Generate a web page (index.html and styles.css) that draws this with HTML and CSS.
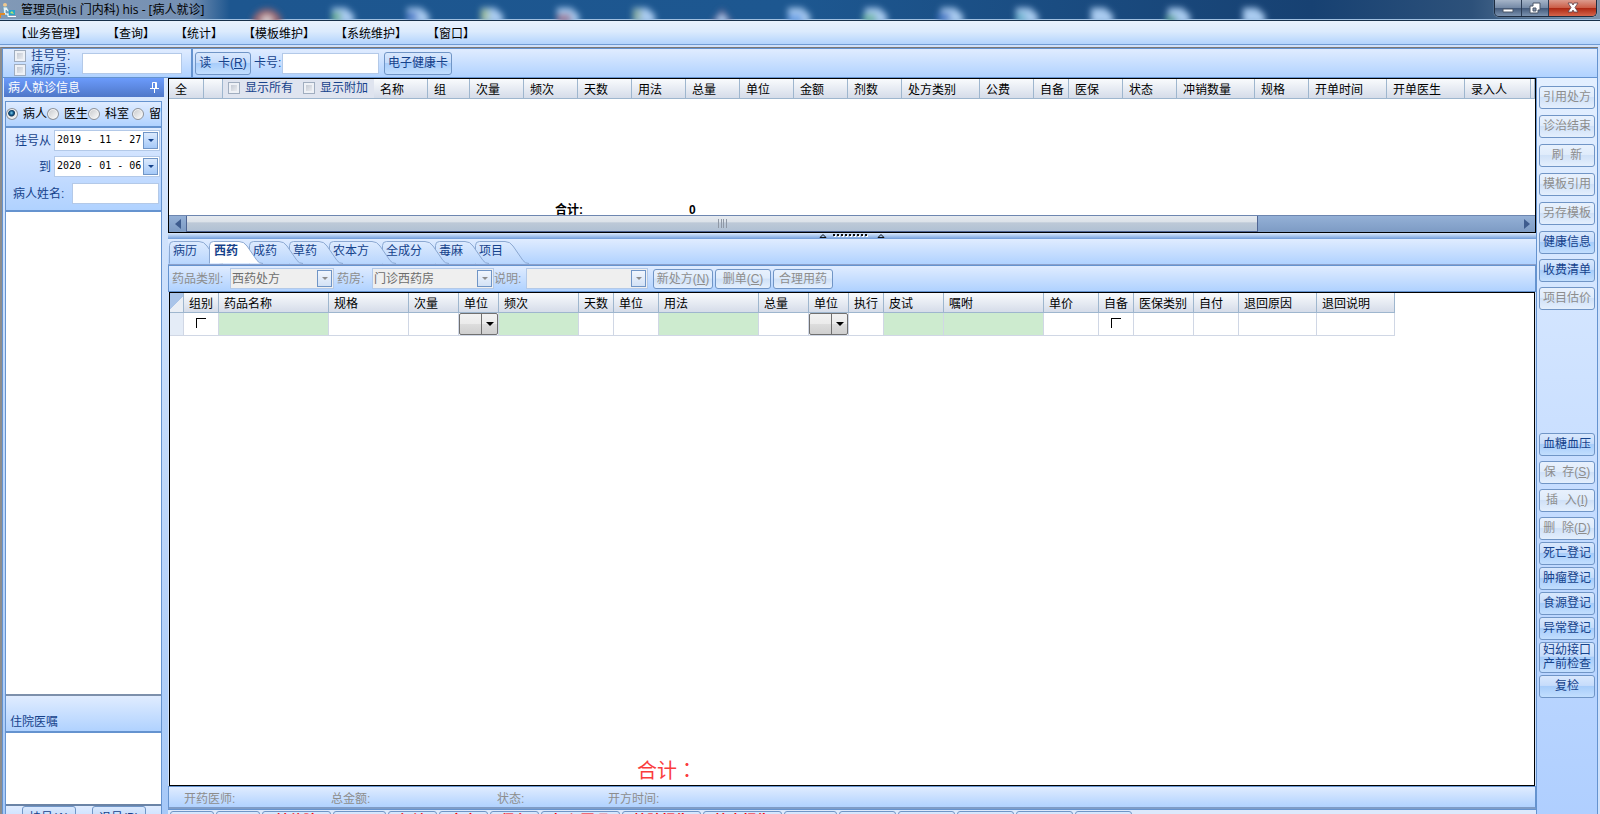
FILE: index.html
```html
<!DOCTYPE html>
<html lang="zh-CN">
<head>
    <meta charset="UTF-8">
    <meta name="viewport" content="width=device-width, initial-scale=1.0">
    <title>管理员(his 门内科) his - [病人就诊]</title>
    <link rel="stylesheet" href="styles.css">
</head>
<body>

<div class="app">
    <header class="titlebar">
        <svg class="glass" width="1300" height="20" viewBox="0 0 1300 20" aria-hidden="true">
            <defs>
                <filter id="soft" x="-20%" y="-100%" width="140%" height="300%"><feGaussianBlur stdDeviation="3"/></filter>
                <path id="doc" d="M-10 24V8h14l8 7v9z"/>
            </defs>
            <g filter="url(#soft)" fill="#a9cbf0">
                <path d="M252 24a15 15 0 0 1 30 0z" fill="#a0676f"/>
                <circle cx="267" cy="21" r="6" fill="#d6c9cc"/>
                <use href="#doc" x="342"/><rect x="332" y="12" width="9" height="9" fill="#6bb093"/>
                <use href="#doc" x="417"/><rect x="407" y="12" width="10" height="9" fill="#4b7cc9"/>
                <use href="#doc" x="491"/><rect x="481" y="9" width="8" height="12" fill="#a3c2a0"/>
                <use href="#doc" x="567"/><rect x="557" y="14" width="14" height="8" fill="#9c7795"/>
                <use href="#doc" x="643"/><rect x="633" y="9" width="8" height="12" fill="#8db1a6"/>
                <path d="M711 24l11-15 11 15z" fill="#87739b"/><circle cx="722" cy="20" r="5"/>
                <use href="#doc" x="798"/><rect x="788" y="14" width="14" height="8" fill="#6da2e6"/>
                <use href="#doc" x="875"/><rect x="863" y="14" width="13" height="8" fill="#70b6a4"/>
                <use href="#doc" x="951"/><rect x="938" y="13" width="12" height="8" fill="#3c74c5"/>
                <use href="#doc" x="1026"/><rect x="1016" y="13" width="10" height="8" fill="#6db4cf"/>
                <use href="#doc" x="1101"/>
                <use href="#doc" x="1178"/><rect x="1166" y="15" width="10" height="8" fill="#5fa49b"/>
                <use href="#doc" x="1253"/>
            </g>
        </svg>
        <div class="caption">
            <svg width="16" height="16" viewBox="0 0 16 16" aria-hidden="true">
                <circle cx="5" cy="3" r="2" fill="#f0c98f"/>
                <path d="M3 5h4l2 4-1 1-2-2v3h3v4H7v-2H4z" fill="#e8f3f8" stroke="#5e9dbb" stroke-width=".7"/>
                <path d="M0 11h5v2H1v3H0z" fill="#e08a28"/>
                <path d="M9 8h6v5H9z" fill="#29a6c9"/>
                <path d="M8 14h8v1H8z" fill="#fff"/>
                <path d="M10 11l2-2 2 3z" fill="#bfe36d"/>
            </svg>
            <span>管理员(his 门内科) his - [病人就诊]</span>
        </div>
        <div class="controls">
            <button type="button" aria-label="最小化">
                <svg width="14" height="12" viewBox="0 0 14 12"><path d="M2 7h10v3H2z" fill="#fff" stroke="#4b5668"/></svg>
            </button>
            <button type="button" aria-label="还原">
                <svg width="14" height="13" viewBox="0 0 14 13"><path d="M5 1h7v7h-2v3H2V4h3z" fill="#fff" stroke="#4b5668"/><path d="M5 6h3v3H5z" fill="#8595ad" stroke="#4b5668"/></svg>
            </button>
            <button type="button" class="close" aria-label="关闭">
                <svg width="14" height="12" viewBox="0 0 14 12"><path d="M2 1h4l1 2 1-2h4L9 5.500l3 4.500H8L7 8l-1 2H2l3-4.500z" fill="#fff" stroke="#5d4048" stroke-width=".8"/></svg>
            </button>
        </div>
    </header>

    <nav class="menubar">
        <button type="button">【业务管理】</button>
        <button type="button">【查询】</button>
        <button type="button">【统计】</button>
        <button type="button">【模板维护】</button>
        <button type="button">【系统维护】</button>
        <button type="button">【窗口】</button>
    </nav>

    <div class="frame">
        <div class="toolbar">
            <div class="search">
                <div class="checks">
                    <label><input type="checkbox" class="check">挂号号:</label>
                    <label><input type="checkbox" class="check">病历号:</label>
                </div>
                <input type="text" class="field" aria-label="号码">
            </div>
            <div class="card-tools">
                <button type="button" class="btn">读&nbsp; 卡(<u>R</u>)</button>
                <label for="cardNo">卡号:</label>
                <input type="text" class="field" id="cardNo">
                <button type="button" class="btn health">电子健康卡</button>
            </div>
        </div>

        <div class="body">
            <aside class="patients">
                <h2>病人就诊信息
                    <svg width="9" height="11" viewBox="0 0 9 11" aria-hidden="true"><path d="M2.500 6V.5h4V6M5.500 1v5M0 6.500h9M4.500 7v4" fill="none" stroke="#fff"/></svg>
                </h2>
                <div class="panel">
                    <div class="kinds">
                        <label><input type="radio" name="kind" checked>病人</label>
                        <label><input type="radio" name="kind">医生</label>
                        <label><input type="radio" name="kind">科室</label>
                        <label><input type="radio" name="kind">留</label>
                    </div>
                    <div class="filters">
                        <label for="dateFrom">挂号从</label>
                        <div class="date">
                            <input type="text" id="dateFrom" value="2019 - 11 - 27">
                            <button type="button" class="drop" aria-label="选择开始日期"></button>
                        </div>
                        <label for="dateTo">到</label>
                        <div class="date">
                            <input type="text" id="dateTo" value="2020 - 01 - 06">
                            <button type="button" class="drop" aria-label="选择结束日期"></button>
                        </div>
                    </div>
                    <div class="name-row">
                        <label for="patientName">病人姓名:</label>
                        <input type="text" class="field" id="patientName">
                    </div>
                    <div class="list"></div>
                    <h3>住院医嘱</h3>
                    <div class="orders"></div>
                    <div class="reg-buttons">
                        <button type="button" class="btn">挂号(<u>A</u>)</button>
                        <button type="button" class="btn">退号(<u>B</u>)</button>
                    </div>
                </div>
            </aside>

            <main class="work">
                <section class="summary">
                    <table class="grid">
                        <colgroup>
                            <col class="w35"><col class="w19"><col class="w151"><col class="w54"><col class="w42">
                            <col class="w54"><col class="w54"><col class="w54"><col class="w54">
                            <col class="w54"><col class="w54"><col class="w54"><col class="w54">
                            <col class="w78"><col class="w54"><col class="w35"><col class="w54"><col class="w54">
                            <col class="w78"><col class="w54"><col class="w78"><col class="w78"><col class="w66"><col>
                        </colgroup>
                        <thead>
                            <tr>
                                <th>全</th><th></th>
                                <th class="shows">
                                    <div>
                                        <label><input type="checkbox" class="check">显示所有</label>
                                        <label><input type="checkbox" class="check">显示附加</label>
                                    </div>
                                </th>
                                <th>名称</th><th>组</th><th>次量</th><th>频次</th><th>天数</th><th>用法</th>
                                <th>总量</th><th>单位</th><th>金额</th><th>剂数</th><th>处方类别</th><th>公费</th>
                                <th>自备</th><th>医保</th><th>状态</th><th>冲销数量</th><th>规格</th>
                                <th>开单时间</th><th>开单医生</th><th>录入人</th><th></th>
                            </tr>
                        </thead>
                    </table>
                    <div class="sum-row"><span>合计:</span><span>0</span></div>
                    <div class="scrollbar">
                        <span class="arrow"><svg width="6" height="10" viewBox="0 0 6 10"><path d="M6 0v10L0 5z" fill="#3e5c8e"/></svg></span>
                        <span class="track"><span class="thumb"><svg width="9" height="9" viewBox="0 0 9 9"><path d="M.5 0v9M3.500 0v9M5.500 0v9M8.500 0v9" stroke="#8f98a5"/></svg></span></span>
                        <span class="arrow"><svg width="6" height="10" viewBox="0 0 6 10"><path d="M0 0v10l6-5z" fill="#3e5c8e"/></svg></span>
                    </div>
                </section>

                <div class="splitter">
                    <svg width="66" height="6" viewBox="0 0 66 6" aria-hidden="true">
                        <path d="M1 4.500h6L4 1.500zM59 4.500h6L62 1.500z" fill="#9cc0ee" stroke="#111"/>
                        <path d="M15 3h36" stroke="#fff" stroke-width="2" stroke-dasharray="2 2"/>
                        <path d="M14 2h36" stroke="#111" stroke-width="2" stroke-dasharray="2 2"/>
                    </svg>
                </div>

                <div class="tabs">
                    <button type="button" class="tab"><svg width="54" height="23"><use href="#tab2"/></svg><span>病历</span></button>
                    <button type="button" class="tab active"><svg width="54" height="23"><use href="#tab2"/></svg><span>西药</span></button>
                    <button type="button" class="tab"><svg width="54" height="23"><use href="#tab2"/></svg><span>成药</span></button>
                    <button type="button" class="tab"><svg width="54" height="23"><use href="#tab2"/></svg><span>草药</span></button>
                    <button type="button" class="tab wide"><svg width="67" height="23"><use href="#tab3"/></svg><span>农本方</span></button>
                    <button type="button" class="tab wide"><svg width="67" height="23"><use href="#tab3"/></svg><span>全成分</span></button>
                    <button type="button" class="tab"><svg width="54" height="23"><use href="#tab2"/></svg><span>毒麻</span></button>
                    <button type="button" class="tab"><svg width="54" height="23"><use href="#tab2"/></svg><span>项目</span></button>
                </div>

                <div class="rx-bar">
                    <label for="drugType" class="first">药品类别:</label>
                    <span class="combo type"><select id="drugType" disabled><option>西药处方</option></select><i class="drop"></i></span>
                    <label for="pharmacy">药房:</label>
                    <span class="combo"><select id="pharmacy" disabled><option>门诊西药房</option></select><i class="drop"></i></span>
                    <label for="note" class="last">说明:</label>
                    <span class="combo"><select id="note" disabled><option></option></select><i class="drop"></i></span>
                    <div class="rx-buttons">
                        <button type="button" class="btn" disabled>新处方(<u>N</u>)</button>
                        <button type="button" class="btn short" disabled>删单(<u>C</u>)</button>
                        <button type="button" class="btn" disabled>合理用药</button>
                    </div>
                </div>

                <section class="rx">
                    <table class="grid">
                        <colgroup>
                            <col class="w14"><col class="w35"><col class="w110"><col class="w80"><col class="w50">
                            <col class="w40"><col class="w80"><col class="w35"><col class="w45"><col class="w100">
                            <col class="w50"><col class="w40"><col class="w35"><col class="w60"><col class="w100">
                            <col class="w55"><col class="w35"><col class="w60"><col class="w45"><col class="w78"><col class="w78">
                        </colgroup>
                        <thead>
                            <tr>
                                <th class="corner"></th><th>组别</th><th>药品名称</th><th>规格</th><th>次量</th><th>单位</th>
                                <th>频次</th><th>天数</th><th>单位</th><th>用法</th><th>总量</th><th>单位</th><th>执行</th>
                                <th>皮试</th><th>嘱咐</th><th>单价</th><th>自备</th><th>医保类别</th><th>自付</th>
                                <th>退回原因</th><th>退回说明</th>
                            </tr>
                        </thead>
                        <tbody>
                            <tr>
                                <td class="row-head"></td>
                                <td class="tick"><input type="checkbox" aria-label="组别"></td>
                                <td class="req"></td><td></td><td></td>
                                <td class="unit"><span class="cell-combo"><select aria-label="次量单位"><option></option></select><i></i></span></td>
                                <td class="req"></td><td></td><td></td><td class="req"></td><td></td>
                                <td class="unit"><span class="cell-combo"><select aria-label="总量单位"><option></option></select><i></i></span></td>
                                <td></td><td class="req"></td><td class="req"></td><td></td>
                                <td class="tick"><input type="checkbox" aria-label="自备"></td>
                                <td></td><td></td><td></td><td></td>
                            </tr>
                        </tbody>
                    </table>
                    <div class="total" lang="zh-Hant">合计：</div>
                </section>

                <div class="status">
                    <span>开药医师:</span>
                    <span>总金额:</span>
                    <span>状态:</span>
                    <span>开方时间:</span>
                </div>

                <div class="actions">
                    <button type="button" class="btn s"></button>
                    <button type="button" class="btn s"></button>
                    <button type="button" class="btn l">转住院</button>
                    <button type="button" class="btn m"></button>
                    <button type="button" class="btn n">复诊</button>
                    <button type="button" class="btn n">审方</button>
                    <button type="button" class="btn n">保存</button>
                    <button type="button" class="btn xl">打印医嘱</button>
                    <button type="button" class="btn xl">检验报告</button>
                    <button type="button" class="btn xl">检查报告</button>
                    <button type="button" class="btn m"></button>
                    <button type="button" class="btn w"></button>
                    <button type="button" class="btn w"></button>
                    <button type="button" class="btn w"></button>
                    <button type="button" class="btn w"></button>
                    <button type="button" class="btn w"></button>
                </div>
            </main>

            <aside class="side">
                <div class="group loose">
                    <button type="button" class="btn" disabled>引用处方</button>
                    <button type="button" class="btn" disabled>诊治结束</button>
                    <button type="button" class="btn" disabled>刷&nbsp; 新</button>
                    <button type="button" class="btn" disabled>模板引用</button>
                    <button type="button" class="btn" disabled>另存模板</button>
                    <button type="button" class="btn">健康信息</button>
                </div>
                <div class="group billing">
                    <button type="button" class="btn">收费清单</button>
                    <button type="button" class="btn" disabled>项目估价</button>
                </div>
                <div class="group medium">
                    <button type="button" class="btn">血糖血压</button>
                    <button type="button" class="btn" disabled>保&nbsp; 存(<u>S</u>)</button>
                    <button type="button" class="btn" disabled>插&nbsp; 入(<u>I</u>)</button>
                    <button type="button" class="btn" disabled>删&nbsp; 除(<u>D</u>)</button>
                </div>
                <div class="group tight">
                    <button type="button" class="btn">死亡登记</button>
                    <button type="button" class="btn">肿瘤登记</button>
                    <button type="button" class="btn">食源登记</button>
                    <button type="button" class="btn">异常登记</button>
                    <button type="button" class="btn tall">妇幼接口<br>产前检查</button>
                    <button type="button" class="btn">复检</button>
                </div>
            </aside>
        </div>
    </div>
</div>

<svg class="defs" width="0" height="0" aria-hidden="true">
    <defs>
        <linearGradient id="tabFill" x1="0" y1="0" x2="0" y2="1">
            <stop offset="0" stop-color="#deebfe"/>
            <stop offset="1" stop-color="#b9d6fd"/>
        </linearGradient>
        <path id="tab2" d="M.5 22.500V4.500Q.5 .5 4.500 .5H30Q35 .5 38 5L48 19.500Q50 22.500 54 22.500"/>
        <path id="tab3" d="M.5 22.500V4.500Q.5 .5 4.500 .5H43Q48 .5 51 5L61 19.500Q63 22.500 67 22.500"/>
    </defs>
</svg>

</body>
</html>
```

FILE: styles.css
```css
* {
    box-sizing: border-box;
}
body {
    margin: 0;
    height: 100vh;
    overflow: hidden;
    font-family: "Liberation Sans", "Noto Sans CJK SC", sans-serif;
    font-size: 12px;
    line-height: 14px;
    color: #15428b;
    background: #cfe1fb;
}
button, input, select {
    font: inherit;
    color: inherit;
    margin: 0;
    padding: 0;
}
h2, h3 {
    margin: 0;
    font-size: 12px;
    font-weight: normal;
}
.defs {
    position: absolute;
}

/* the window is a little taller than the screen */
.app {
    display: flex;
    flex-direction: column;
    height: calc(100vh + 20px);
}

/* title bar */
.titlebar {
    position: relative;
    display: flex;
    flex: none;
    justify-content: space-between;
    height: 21px;
    overflow: hidden;
    color: #000;
    background: linear-gradient(90deg, #8199b6 0, #7590b3 190px, #1d568f 230px, #1d5790 50%, #174172 82%, #2d517a 92%, #7d93ab 100%);
    border-bottom: 1px solid #17304a;
    box-shadow: inset 0 -1px 0 #9fbfe0;
}
.glass {
    position: absolute;
    left: 0;
    top: 0;
}
.caption {
    display: flex;
    align-items: center;
    gap: 5px;
    height: 19px;
    position: relative;
    font-family: "Open Sans", "Noto Sans CJK SC", sans-serif;
    white-space: nowrap;
}
.controls {
    position: relative;
    display: flex;
    height: 17px;
    margin-right: 3px;
    border: 1px solid #1d2c40;
    border-top: 0;
    border-radius: 0 0 5px 5px;
    overflow: hidden;
    box-shadow: 0 0 1px #fff;
}
.controls button {
    display: flex;
    align-items: center;
    justify-content: center;
    width: 27px;
    border: 0;
    border-right: 1px solid #2b3c55;
    background: linear-gradient(#a5b4c8, #7388a5 50%, #42597a 51%, #7c93b0);
}
.controls .close {
    width: 47px;
    border-right: 0;
    background: linear-gradient(#dc9b8d, #cb5c45 50%, #ad2712 51%, #d5654b);
}

/* menu */
.menubar {
    display: flex;
    flex: none;
    gap: 20px;
    height: 24px;
    padding: 2px 0 0 15px;
    background: linear-gradient(#e9f2fd, #dcebfd 45%, #b3d4fd);
    border-bottom: 1px solid #6f9bd3;
}
.menubar button {
    border: 0;
    background: none;
    color: #000;
}

.frame {
    display: flex;
    flex-direction: column;
    flex: 1;
    min-height: 0;
    margin: 2px 2px 0 0;
    border-top: 1px solid #7d7873;
    border-left: 2px solid #8d8d8d;
}

/* search toolbar */
.toolbar {
    display: flex;
    flex: none;
    height: 30px;
    border: 1px solid #6593cf;
    background: linear-gradient(#e0ecff, #b0d2ff);
}
.search {
    display: flex;
    align-items: center;
    width: 190px;
    padding-left: 11px;
    border-right: 2px solid #6593cf;
}
.checks {
    width: 68px;
}
.checks label {
    display: flex;
    align-items: center;
    gap: 5px;
}
.check {
    appearance: none;
    flex: none;
    width: 12px;
    height: 12px;
    border: 1px solid #a0adbf;
    background: linear-gradient(135deg, #b9c0cc, #f4f5f7);
    box-shadow: inset 0 0 0 2px #eef1f6;
}
.field {
    height: 21px;
    min-width: 0;
    padding: 0 4px;
    border: 1px solid #b3c9e8;
    background: #fff;
    color: #000;
}
.search .field {
    width: 100px;
}
.card-tools {
    display: flex;
    align-items: center;
    padding-left: 2px;
}
.card-tools .btn {
    width: 56px;
    height: 23px;
}
.card-tools label {
    width: 31px;
    padding-left: 3px;
}
.card-tools .field {
    width: 97px;
}
.card-tools .health {
    width: 68px;
    margin-left: 5px;
}

.btn {
    flex: none;
    border: 1px solid #7095c6;
    border-radius: 3px;
    background: linear-gradient(#d9e8fd, #c6dcfb 45%, #a8cdfa 50%, #c2defe);
    color: #15428b;
    white-space: nowrap;
}
.btn:disabled {
    background: linear-gradient(#e8f1fd, #e0ecfb 45%, #d0e1f7 50%, #e4effd);
    color: #8d8d8d;
}

.body {
    display: flex;
    flex: 1;
    min-height: 0;
}

/* patient list */
.patients {
    display: flex;
    flex: none;
    flex-direction: column;
    width: 166px;
    padding: 0 4px 0 1px;
    border-left: 1px solid #6593cf;
    background: linear-gradient(#dbe9fd, #a5c8f8);
}
.patients h2 {
    display: flex;
    align-items: center;
    justify-content: space-between;
    flex: none;
    height: 19px;
    padding: 0 5px 0 4px;
    color: #fff;
    background: linear-gradient(#6b9bfb, #4f77c8);
}
.panel {
    display: flex;
    flex: 1;
    flex-direction: column;
    min-height: 0;
    margin: 4px 2px 0 1px;
    border: 1px solid #6593cf;
    background: #c8defd;
}
.kinds {
    display: flex;
    align-items: center;
    flex: none;
    height: 26px;
    overflow: hidden;
    color: #000;
    background: linear-gradient(#e0ecff, #b0d2ff);
    border-bottom: 2px solid #6593cf;
}
.kinds label {
    display: flex;
    flex: none;
    align-items: center;
    gap: 5px;
    width: 41px;
    white-space: nowrap;
}
.kinds label:nth-child(3) {
    width: 44px;
}
.kinds input {
    appearance: none;
    width: 12px;
    height: 12px;
    border: 1px solid #8e9299;
    border-radius: 50%;
    background: linear-gradient(135deg, #c5c7ca, #fff);
    box-shadow: inset 0 0 0 1px #f4f4f4;
}
.kinds input:checked {
    background: radial-gradient(circle at 45% 40%, #7fd0ee 0, #12598c 2px, #123859 3px, #e8eaec 4px);
}
.filters {
    display: grid;
    grid-template-columns: 45px 106px;
    gap: 5px 3px;
    align-items: center;
    flex: none;
    padding-top: 2px;
    background: linear-gradient(#e0ecff, #c3dbff);
}
.filters label {
    text-align: right;
}
.date {
    display: flex;
    align-items: center;
    height: 21px;
    padding: 1px;
    border: 1px solid #b3c9e8;
    background: #fff;
}
.date input {
    flex: 1;
    min-width: 0;
    padding: 0 0 2px 1px;
    border: 0;
    font-family: "DejaVu Sans Mono", monospace;
    font-size: 10px;
    color: #000;
}
.drop {
    display: flex;
    align-items: center;
    justify-content: center;
    flex: none;
    width: 15px;
    height: 17px;
    border: 1px solid #7095c6;
    background: linear-gradient(#dceafd, #a5c9f8);
}
.drop::after {
    content: "";
    border: 3px solid transparent;
    border-top-color: #15428b;
    border-bottom: 0;
}
.name-row {
    display: flex;
    align-items: center;
    flex: none;
    height: 35px;
    padding-left: 7px;
    border-bottom: 2px solid #6593cf;
    background: linear-gradient(#c3dbff, #b0d2ff);
}
.name-row label {
    width: 59px;
}
.name-row .field {
    width: 87px;
}
.list {
    flex: 1;
    min-height: 0;
    background: #fff;
}
.panel h3 {
    flex: none;
    height: 39px;
    padding: 19px 0 0 4px;
    border-top: 2px solid #7d90ab;
    border-bottom: 2px solid #6593cf;
    background: linear-gradient(#e0ecff, #b0d2ff);
}
.orders {
    flex: none;
    height: 71px;
    background: #fff;
}
.reg-buttons {
    display: flex;
    flex: none;
    gap: 16px;
    height: 29px;
    padding: 0 0 0 16px;
    border-top: 2px solid #6b84a6;
    background: linear-gradient(#e0ecff, #b0d2ff);
}
.reg-buttons .btn {
    width: 54px;
    height: 23px;
}

/* work area */
.work {
    display: flex;
    flex: 1;
    flex-direction: column;
    min-width: 0;
}
.summary {
    display: flex;
    flex: none;
    flex-direction: column;
    height: 155px;
    border: 1px solid #000;
    background: #fff;
}
.grid {
    table-layout: fixed;
    width: 0;
    border-collapse: separate;
    border-spacing: 0;
    color: #000;
}
.summary .grid {
    width: 100%;
}
.grid th {
    height: 20px;
    padding: 2px 0 0 5px;
    overflow: hidden;
    font-weight: normal;
    text-align: left;
    white-space: nowrap;
    background: linear-gradient(#f9fbfd, #d5dce9);
    border-right: 1px solid #9eb6ce;
    border-bottom: 1px solid #9eb6ce;
}
.summary th {
    padding-left: 6px;
}
.grid td {
    height: 23px;
    padding: 0;
    border-right: 1px solid #d0d7e5;
    border-bottom: 1px solid #d0d7e5;
}
.grid .shows {
    padding: 0 0 2px 5px;
    color: #15428b;
    background: #dfe4ef;
    border-right: 0;
}
.shows div {
    display: flex;
    gap: 10px;
}
.shows label {
    display: flex;
    align-items: center;
    gap: 5px;
}
.w14 { width: 14px; }
.w19 { width: 19px; }
.w35 { width: 35px; }
.w40 { width: 40px; }
.w42 { width: 42px; }
.w45 { width: 45px; }
.w50 { width: 50px; }
.w54 { width: 54px; }
.w55 { width: 55px; }
.w60 { width: 60px; }
.w66 { width: 66px; }
.w78 { width: 78px; }
.w80 { width: 80px; }
.w100 { width: 100px; }
.w110 { width: 110px; }
.w151 { width: 151px; }

.sum-row {
    display: flex;
    flex: 1;
    align-items: flex-end;
    min-height: 0;
    padding-left: 386px;
    font-weight: bold;
    line-height: 10px;
    color: #000;
}
.sum-row span {
    width: 134px;
}
.scrollbar {
    display: flex;
    flex: none;
    height: 17px;
    border-top: 1px solid #6d86b0;
    background: linear-gradient(#94b0d6, #7d9bc4);
}
.arrow {
    display: flex;
    align-items: center;
    justify-content: center;
    width: 17px;
}
.track {
    flex: 1;
}
.thumb {
    display: flex;
    align-items: center;
    justify-content: center;
    width: 80.5%;
    height: 16px;
    border: 1px solid #4f6593;
    border-top: 0;
    background: linear-gradient(#e6eaef, #dce2e9 40%, #bdc9d7 45%, #b1c1d4);
}
.splitter {
    display: flex;
    flex: none;
    justify-content: center;
    height: 6px;
    background: linear-gradient(#dbe9fb, #a9c6ee 50%, #6f9bd8);
}

/* tabs */
.tabs {
    display: flex;
    flex: none;
    align-items: flex-end;
    height: 26px;
    padding-left: 1px;
    background: linear-gradient(#e0ecff, #b0d2ff);
    border-bottom: 1px solid #8ba0cb;
    isolation: isolate;
}
.tab {
    position: relative;
    width: 40px;
    height: 23px;
    padding: 0 0 4px 4px;
    border: 0;
    background: none;
    color: #15428b;
    text-align: left;
    white-space: nowrap;
}
.tab.wide {
    width: 53px;
}
.tab svg {
    position: absolute;
    left: 0;
    top: 0;
    fill: url(#tabFill);
    stroke: #8ba8d2;
}
.tab span {
    position: relative;
}
.tab:nth-child(3) { z-index: 6; }
.tab:nth-child(4) { z-index: 5; }
.tab:nth-child(5) { z-index: 4; }
.tab:nth-child(6) { z-index: 3; }
.tab:nth-child(7) { z-index: 2; }
.tab:nth-child(8) { z-index: 1; }
.tab.active {
    z-index: 9;
    padding-left: 5px;
    font-weight: bold;
}
.tab.active svg {
    fill: #fff;
}

/* prescription tools */
.rx-bar {
    display: flex;
    flex: none;
    align-items: center;
    height: 27px;
    padding-left: 3px;
    border: 1px solid #6593cf;
    background: linear-gradient(#e0ecff, #b0d2ff);
    color: #8d8d8d;
}
.rx-bar label {
    width: 38px;
    padding-left: 3px;
    white-space: nowrap;
}
.rx-bar .first {
    width: 58px;
    padding-left: 0;
}
.rx-bar .last {
    width: 32px;
    padding-left: 0;
}
.combo {
    display: flex;
    align-items: center;
    width: 122px;
    height: 21px;
    padding: 1px;
    border: 1px solid #b3c9e8;
    background: #efefef;
}
.combo.type {
    width: 104px;
}
.combo select {
    appearance: none;
    flex: 1;
    min-width: 0;
    border: 0;
    background: none;
    color: #6d6d6d;
    opacity: 1;
}
.combo .drop {
    background: linear-gradient(#f1f6fd, #d3e2f6);
}
.combo .drop::after {
    border-top-color: #8d8d8d;
}
.rx-buttons {
    display: flex;
    gap: 2px;
    padding-left: 5px;
}
.rx-buttons .btn {
    width: 60px;
    height: 20px;
}
.rx-buttons .short {
    width: 56px;
}

/* prescription grid */
.rx {
    display: flex;
    flex: 1;
    flex-direction: column;
    justify-content: space-between;
    min-height: 0;
    margin: 0 1px;
    border: 1px solid #000;
    background: #fff;
}
.grid .corner {
    background: linear-gradient(135deg, #a9c4e9 50%, #e9eef5 51%);
}
.row-head {
    background: #e4ecf7;
}
.grid .req {
    background: #cdebcf;
}
.tick {
    text-align: center;
}
.tick input {
    appearance: none;
    width: 10px;
    height: 10px;
    border: solid #000;
    border-width: 1px 0 0 1px;
}
.cell-combo {
    display: flex;
    width: 39px;
    height: 22px;
    border: 1px solid #707070;
    border-radius: 2px;
    background: linear-gradient(#f2f2f2, #ebebeb 50%, #dddddd 51%, #cfcfcf);
}
.cell-combo select {
    appearance: none;
    flex: 1;
    min-width: 0;
    border: 0;
    background: none;
}
.cell-combo i {
    display: flex;
    align-items: center;
    justify-content: center;
    width: 16px;
    border: 1px solid #707070;
    border-width: 0 0 0 1px;
}
.cell-combo i::after {
    content: "";
    border: 4px solid transparent;
    border-top-color: #000;
    border-bottom: 0;
}
.total {
    padding: 0 0 3px 467px;
    font-family: "Noto Sans CJK TC", sans-serif;
    font-size: 20px;
    line-height: 24px;
    color: #fa3c3c;
}

.status {
    display: flex;
    flex: none;
    align-items: center;
    height: 23px;
    padding: 3px 0 0 15px;
    border: 1px solid #6593cf;
    border-bottom: 2px solid #7f9cc6;
    background: linear-gradient(#e0ecff, #b0d2ff);
    color: #8d8d8d;
}
.status span {
    width: 147px;
}
.status span:nth-child(2) {
    width: 166px;
}
.status span:nth-child(3) {
    width: 111px;
}
.actions {
    display: flex;
    flex: none;
    gap: 2px;
    height: 25px;
    padding: 1px 0 0 2px;
    border-top: 1px solid #6593cf;
    background: #dce9fc;
}
.actions .btn {
    height: 23px;
    padding-bottom: 6px;
    font-size: 14px;
    font-weight: bold;
    line-height: 12px;
    color: #f00;
}
.actions .s { width: 44px; }
.actions .n { width: 49px; }
.actions .m { width: 53px; }
.actions .w { width: 57px; }
.actions .l { width: 69px; }
.actions .xl { width: 79px; }

/* right-hand buttons */
.side {
    display: flex;
    flex: none;
    flex-direction: column;
    width: 62px;
    padding: 8px 0 0 2px;
    border: solid #6593cf;
    border-width: 0 1px;
    background: linear-gradient(#e3efff, #aeceff);
}
.group {
    display: flex;
    flex-direction: column;
}
.side .btn {
    width: 56px;
    height: 23px;
    padding-bottom: 1px;
}
.loose {
    gap: 6px;
}
.billing {
    gap: 5px;
    height: 179px;
    padding-top: 5px;
}
.medium {
    gap: 5px;
    height: 109px;
}
.tight {
    gap: 2px;
}
.side .tall {
    height: 31px;
}
```
